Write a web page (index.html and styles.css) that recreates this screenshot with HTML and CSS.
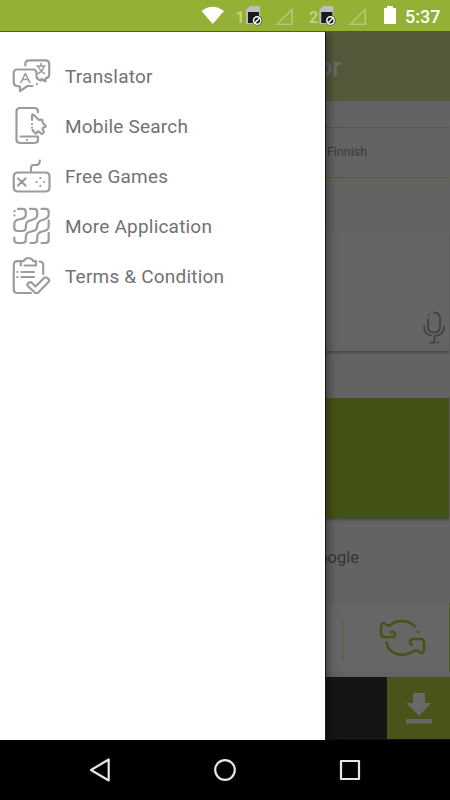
FILE: index.html
```html
<!DOCTYPE html>
<html lang="en">
<head>
<meta charset="utf-8">
<title>Translator</title>
<link rel="stylesheet" href="styles.css">
</head>
<body>
<div class="device">
  <header class="status">
    <svg width="260" height="32" viewBox="190 0 260 32">
      <path fill="#fff" d="M201.500 11Q212.500 2.500 224 11L212.700 24Z"/>
      <text class="sim-number" x="235.500" y="22.500">1</text>
      <g id="sim">
        <path fill="#bdbdbd" d="M250 6h9q1 0 1 1v17h-14V10Z"/>
        <path fill="#171b1e" d="M248 12h11v11h-11z"/>
        <circle cx="257.200" cy="20.500" r="5" fill="#171b1e"/>
        <circle cx="257.200" cy="20.500" r="3.700" fill="none" stroke="#fff" stroke-width="1.500"/>
        <path stroke="#fff" stroke-width="1.500" d="M254.700 23l5-5"/>
      </g>
      <path id="signal" fill="none" stroke="#b3ca70" stroke-width="1.600" d="M277 24.200L292 9.500V24.200Z"/>
      <text class="sim-number" x="309" y="22.500">2</text>
      <use href="#sim" x="73.300"/>
      <use href="#signal" x="73.300"/>
      <path fill="#fff" d="M384 8h3V6h6v2h3v16h-12z"/>
      <text class="clock" x="405" y="22.500">5:37</text>
    </svg>
  </header>

  <div class="screen">
    <main class="app">
      <h1 class="app-title">Translator</h1>
      <section class="languages"><span>Finnish</span></section>
      <section class="card input-card">
        <svg width="24" height="34" viewBox="422 309 24 34" fill="none" stroke="#434343" stroke-width="1.900" stroke-linecap="round">
          <path d="M434 311.500q6 0 6 6v8q0 6-6 6t-6-6v-7M424 325.500q0 8 7 9M444 325.500q0 9-9.500 9.500v6.500h-4"/>
          <path d="M429.200 314.300h.1M438 341.500h.1"/>
        </svg>
      </section>
      <section class="card output-card"></section>
      <p class="powered">Powered by Google</p>
      <section class="actions">
        <span class="separator"></span>
        <svg width="48" height="40" viewBox="378 617 48 40" fill="none" stroke="#455313" stroke-width="2.500" stroke-linecap="round" stroke-linejoin="round">
          <path d="M415 625.500C409 619 397 618 391 623.500Q388 626 385 622.500Q381 621 381 626V632Q381 636 385 636H392Q395 636 395 633T391 631"/>
          <path d="M386.500 641.500C388 651 397 655 405 653.500C410 653 413 649 416 649.500Q419 650 421 652Q424 652 424 648V642Q424 638 420 638H414Q410 638 410 641T412 643.500"/>
          <path d="M418 631h.1"/>
        </svg>
      </section>
      <section class="banner">
        <div class="download">
          <svg width="28" height="34" viewBox="405 691 28 34" fill="#686866">
            <path d="M413 693h12v10h6.500L419 716l-12.500-13h6.500zM406 719h26v4.500h-26z"/>
          </svg>
        </div>
      </section>
    </main>

    <nav class="drawer">
      <a class="item">
        <svg class="icon" viewBox="11 56 40 40">
          <path d="M25.300 65.500V64Q25.300 60.400 29 60.400H45.500Q49.200 60.400 49.200 64V74.500Q49.200 77.800 46 78.200L45.500 78.500V81.500L41.500 79"/>
          <path d="M32.500 86H27.500L20 91.200V86.500L17 86Q13.700 85.700 13.700 82V73Q13.700 69.500 17.200 69.500H33Q36.500 69.500 36.500 73V75.500Q36.500 79.500 41 80.500"/>
          <path class="fine" d="M21 82.500L25.300 73.500L29.800 82.500M22.500 79.500H28.300M37 66H45M41 63.500V66M38.500 67Q41 72 44.500 73.500M43.700 67Q42 72 38 73.500"/>
          <path d="M36.900 84.200h.1"/>
        </svg><span>Translator</span>
      </a>
      <a class="item">
        <svg class="icon" viewBox="11 106 40 40">
          <path d="M38 112.500V111.500Q38 108 34.500 108H20Q16.500 108 16.500 111.500V139.500Q16.500 143 20 143H34Q38 143 38 139.500V136.500H20.500M26.900 139.800h.1"/>
          <path d="M32 120V115.500Q32 113.800 33.500 114.800L38.500 119.500Q40 120.500 41 119.500Q43 119.500 42.500 122Q42.500 123.500 45.500 125.500Q46.500 127 43.500 127.500Q42 128 43 130Q45 132 42.500 133.500Q41 134.500 39.500 132Q37.500 130.500 37 132.500Q36 134.500 34.500 132.500L32.500 130M32 124v.1M32 127.500v.1"/>
        </svg><span>Mobile Search</span>
      </a>
      <a class="item">
        <svg class="icon" viewBox="11 156 40 40">
          <path d="M39.800 160.500Q39.800 164.800 36.500 165H33.500Q31 165 31 168V172M26 172.500H18Q13.800 172.500 13.800 176.500V187.500Q13.800 191.500 18 191.500H45.500Q49.500 191.500 49.500 187.500V176.500Q49.500 172.500 45.500 172.500H26"/>
          <path d="M18 178.500l7.500 7M25.500 178.500l-7.500 7M40.300 178.200h.1M40.300 185.800h.1M36.500 182h.1M44 182h.1"/>
        </svg><span>Free Games</span>
      </a>
      <a class="item">
        <svg class="icon" viewBox="11 206 40 40">
          <path d="M18 208.800H22.500Q25.800 208.800 25.800 212V214.500C25.800 222 14.300 216.500 14.300 224V227.500Q14.300 231 18 231H22Q25.800 231 25.800 227.500V226C25.800 217.500 37.200 222.500 37.200 215V212Q37.200 208.800 34 208.800H30"/>
          <path d="M41.500 208.800H45.500Q48.700 208.800 48.700 212V214.500C48.700 222 37.200 217.500 37.200 226C37.200 234.500 25.800 228.500 25.800 237V239.500Q25.800 243 22 243H18Q14.300 243 14.300 239.500V237.500"/>
          <path d="M48.700 220.500V226C48.700 234 37.200 228.500 37.200 237V239.500Q37.200 243 33.500 243H30.500M48.700 233V239.500Q48.700 243 45.500 243H41.500M14.500 211.200h.1M14.400 215.500h.1"/>
        </svg><span>More Application</span>
      </a>
      <a class="item">
        <svg class="icon" viewBox="11 256 40 40">
          <path d="M34.500 292.300L27.800 286Q26.500 284.500 28.500 283Q30.300 281.500 32 283L35.500 286.500L44 278Q45.500 276.500 47.500 278.300Q50.500 280 48.500 282L38.500 292.300Q36.500 294 34.500 292.300ZM31 293H17.500Q13.800 293 13.800 289.500V265Q13.800 261.200 17.500 261.200H20.700M39.500 261.500Q43.200 261.500 43.200 265V274"/>
          <path d="M20.700 265.500V261.200H23.500Q25 258 28.500 258T33.500 261.200H36V265.500H24.500M21.500 272H34M21.500 277H34M17.300 272h.1M17.300 277h.1"/>
        </svg><span>Terms &amp; Condition</span>
      </a>
    </nav>
  </div>

  <footer class="navigation">
    <svg width="450" height="60" viewBox="0 740 450 60" fill="none" stroke="#e6e6e6" stroke-width="2.200" stroke-linejoin="round">
      <path d="M91 770L108.700 759.500V780.500Z"/>
      <circle cx="225" cy="770" r="9.800"/>
      <path d="M341 761h18v18h-18z"/>
    </svg>
  </footer>
</div>
</body>
</html>
```
FILE: styles.css
```css
* { box-sizing: border-box; }

body {
  margin: 0;
  font-family: Roboto, "Liberation Sans", sans-serif;
}

.device {
  display: flex;
  flex-direction: column;
  width: 450px;
  height: 800px;
  overflow: hidden;
  background: #000;
}

.status {
  display: flex;
  justify-content: flex-end;
  height: 31px;
  flex: none;
  background: #94b035;
}

.sim-number {
  font-size: 16px;
  font-weight: 700;
  fill: #bfd285;
}

.clock {
  font-size: 18px;
  font-weight: 500;
  fill: #fff;
}

.screen {
  position: relative;
  height: 709px;
  flex: none;
}

.app {
  display: flex;
  flex-direction: column;
  height: 100%;
  background: #636363;
}

.app-title {
  height: 70px;
  margin: 0;
  padding-right: 109px;
  background: #535a3b;
  color: #696b68;
  font-size: 25px;
  font-weight: 500;
  line-height: 73px;
  text-align: right;
}

.languages {
  height: 51px;
  margin: 26px 1px 53px 0;
  padding-left: 327px;
  border-top: 1px solid #536022;
  border-bottom: 1px solid #536022;
  color: #3b3b3b;
  font-size: 12.500px;
  line-height: 48px;
}

.card {
  height: 120px;
  flex: none;
  margin-right: 1px;
  box-shadow: 0 2px 2px #4a4a4a;
}

.input-card {
  display: flex;
  align-items: flex-end;
  justify-content: flex-end;
  margin-bottom: 47px;
  padding: 0 3px 7px 0;
  background: #646464;
}

.output-card { background: #445117; }

.powered {
  height: 85px;
  margin: 0;
  padding-right: 91px;
  color: #353535;
  font-size: 16.500px;
  line-height: 80px;
  text-align: right;
}

.actions {
  display: flex;
  align-items: center;
  justify-content: flex-end;
  gap: 35px;
  height: 69px;
  padding-right: 23px;
  border-right: 1px solid #4b5b21;
  background: #666;
}

.separator {
  width: 1px;
  height: 42px;
  background: #52602d;
}

.banner {
  display: flex;
  justify-content: flex-end;
  height: 63px;
  margin-top: 5px;
  border-bottom: 1px solid #111;
  background: #151515;
}

.download {
  display: flex;
  align-items: center;
  justify-content: center;
  width: 63px;
  background: #4a5319;
}

.drawer {
  position: absolute;
  top: 1px;
  bottom: 0;
  left: 0;
  width: 325px;
  padding-top: 19px;
  background: #fff;
  box-shadow: 1px 0 0 #171b1c, 2px 0 10px rgba(0, 0, 0, .5);
  clip-path: inset(0 -20px 0 0);
}

.item {
  display: flex;
  align-items: center;
  gap: 14px;
  height: 50px;
  padding-left: 11px;
  color: #727272;
  font-size: 19px;
  letter-spacing: .2px;
}

.icon {
  width: 40px;
  height: 40px;
  flex: none;
  fill: none;
  stroke: #9b9c9b;
  stroke-width: 2.200;
  stroke-linecap: round;
  stroke-linejoin: round;
}

.fine { stroke-width: 1.600; }

.navigation {
  height: 60px;
  flex: none;
}
```
